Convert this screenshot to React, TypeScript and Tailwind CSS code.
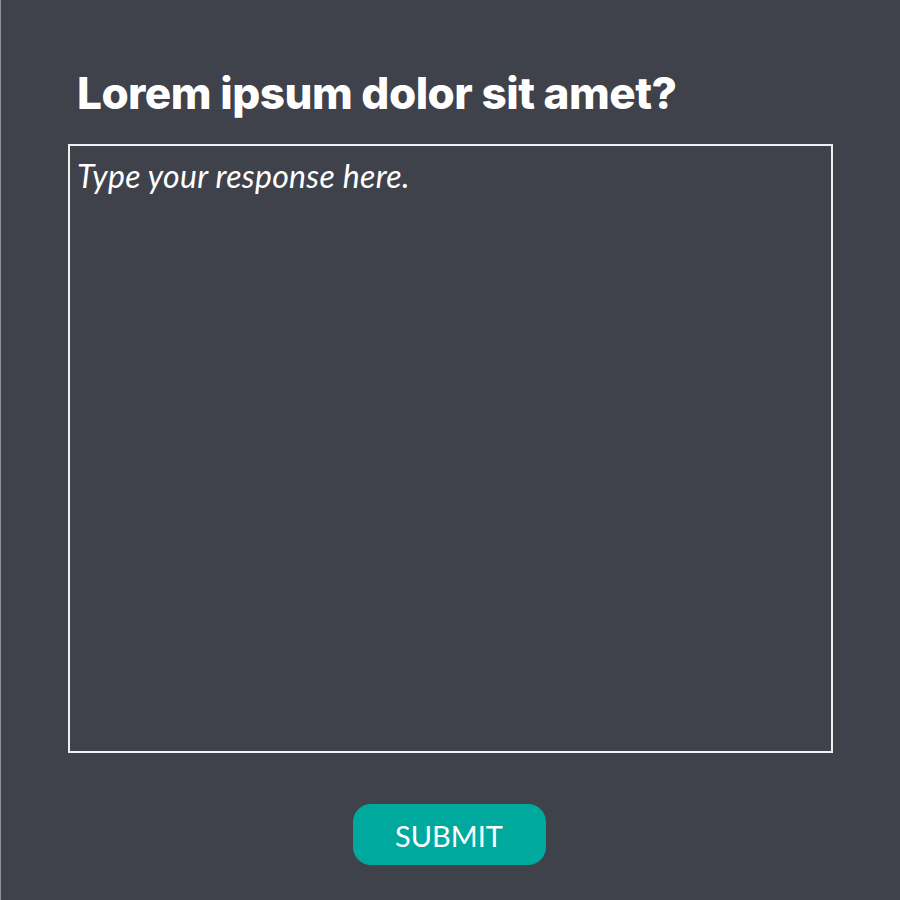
export default function App() {
  return (
    <div className="w-[900px] h-[900px] bg-[#3f424b] border-l border-[#8d9097] flex flex-col font-['Lato',sans-serif]">
      <h1 className="ml-[76px] mt-[65px] text-[44px] leading-[56px] font-extrabold text-white font-['Inter',sans-serif] tracking-[-0.5px]">
        Lorem ipsum dolor sit amet?
      </h1>
      <div className="ml-[67px] mt-[23px] w-[765px] h-[609px] border-2 border-[#f0f0f0] px-[7px] pt-[10px]">
        <p className="text-[32px] leading-[40px] italic text-white tracking-[0.3px]">Type your response here.</p>
      </div>
      <div className="flex justify-center mt-[51px] pr-[3px]">
        <button className="w-[193px] h-[61px] rounded-[18px] bg-[#00a99d] text-white text-[29px] leading-none pt-[2px]">
          SUBMIT
        </button>
      </div>
    </div>
  );
}
